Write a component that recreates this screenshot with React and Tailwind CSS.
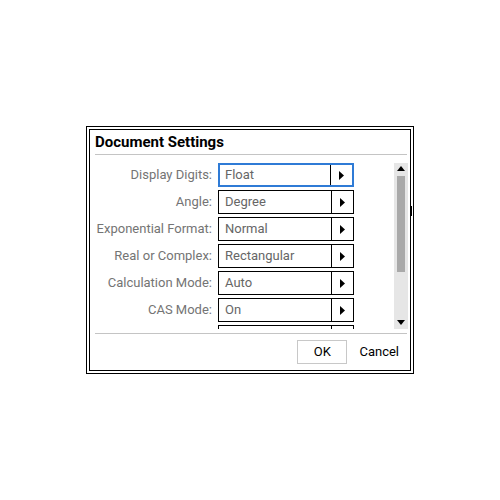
import React from 'react';

const rows = [
  { label: 'Display Digits:', value: 'Float', active: true },
  { label: 'Angle:', value: 'Degree' },
  { label: 'Exponential Format:', value: 'Normal' },
  { label: 'Real or Complex:', value: 'Rectangular' },
  { label: 'Calculation Mode:', value: 'Auto' },
  { label: 'CAS Mode:', value: 'On' },
  { label: '', value: '' },
];

const Arrow = () => (
  <svg width="5" height="9" viewBox="0 0 5 9">
    <path d="M0 0 L5 4.5 L0 9 Z" fill="#000" />
  </svg>
);

const Row = ({ label, value, active }) => (
  <div className="flex items-center h-[24px] shrink-0">
    <div className="w-[128px] text-right pr-[6px] text-[13px] text-[#747474] whitespace-nowrap">{label}</div>
    <div
      className={`flex h-[24px] w-[136px] bg-white ${
        active ? 'border-2 border-[#2f7bd6]' : 'border border-black'
      }`}
    >
      <div className={`flex-1 flex items-center text-[13px] text-[#666] ${active ? 'pl-[5px]' : 'pl-[6px]'}`}>
        {value}
      </div>
      <div className="w-[22px] border-l border-black flex items-center justify-center">
        <Arrow />
      </div>
    </div>
  </div>
);

export default function App() {
  return (
    <div
      className="h-[500px] w-[500px] flex items-center justify-center bg-white"
      style={{ fontFamily: 'Roboto, "DejaVu Sans", sans-serif' }}
    >
      <div className="border border-black p-[2px] w-[328px] h-[248px]">
        <div className="relative border border-black h-full flex flex-col">
          <div className="h-[24px] pl-[5px] pt-[1px] text-[15px] font-bold text-black leading-[22px]">
            Document Settings
          </div>
          <div className="ml-[5px] mr-[3px] h-px bg-[#c4c4c4]" />

          <div className="flex mt-[8px] h-[166px]">
            <div className="flex-1 flex flex-col gap-[3px] overflow-hidden h-[166px]">
              {rows.map((r, i) => (
                <Row key={i} {...r} />
              ))}
            </div>
            <div className="w-[14px] mr-[2px] bg-[#e6e6e6] flex flex-col items-center h-[166px]">
              <svg width="8" height="5" viewBox="0 0 8 5" className="mt-[3px]">
                <path d="M0 5 L4 0 L8 5 Z" fill="#000" />
              </svg>
              <div className="w-[8px] h-[96px] bg-[#a9a9a9] mt-[5px]" />
              <div className="flex-1" />
              <svg width="8" height="5" viewBox="0 0 8 5" className="mb-[4px]">
                <path d="M0 0 L8 0 L4 5 Z" fill="#000" />
              </svg>
            </div>
          </div>

          <div className="ml-[5px] mr-[3px] h-px bg-[#c4c4c4] mt-[4px]" />

          <div className="flex items-center justify-end pt-[6px] pr-[11px]">
            <div className="w-[50px] h-[24px] border border-[#c8c8c8] flex items-center justify-center text-[13px] text-black">
              OK
            </div>
            <div className="ml-[12px] text-[13px] text-black">Cancel</div>
          </div>

          <div className="absolute right-[-2px] top-[76px] w-[2px] h-[10px] bg-black" />
        </div>
      </div>
    </div>
  );
}
